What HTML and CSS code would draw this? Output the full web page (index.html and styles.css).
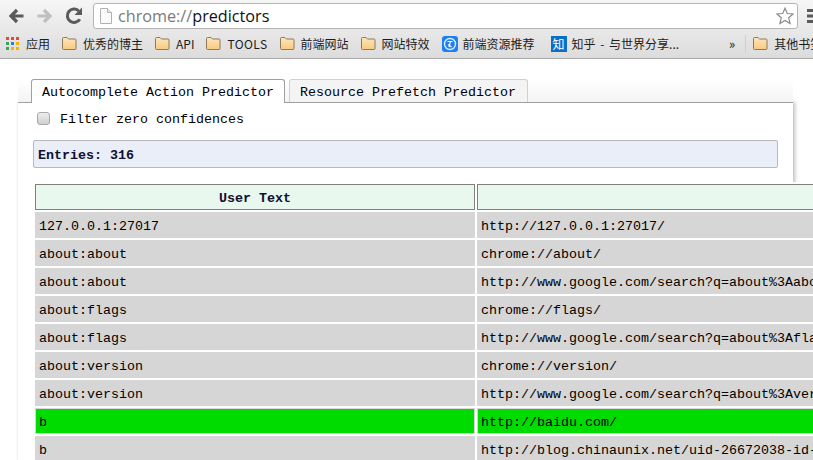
FILE: index.html
```html
<!DOCTYPE html>
<html lang="zh">
<head>
<meta charset="utf-8">
<title>chrome://predictors</title>
<link rel="stylesheet" href="styles.css">
</head>
<body>
<svg class="defs" width="0" height="0" aria-hidden="true">
  <defs>
    <linearGradient id="fg" x1="0" y1="0" x2="0" y2="1"><stop offset="0" stop-color="#fde6bf"/><stop offset="1" stop-color="#f9c97f"/></linearGradient>
    <symbol id="folder" viewBox="0 0 15 13"><path d="M1.500 12.500q-1 0-1-1V1.500q0-1 1-1h3.500l1.500 1.500h6.500q1 0 1 1v8.500q0 1-1 1z" fill="url(#fg)" stroke="#8c7a58"/></symbol>
  </defs>
</svg>
<header class="chrome">
  <div class="toolbar">
    <svg class="nav" width="24" height="24" viewBox="0 0 24 24"><path d="M19.500 12H8M13 6l-6 6 6 6" fill="none" stroke="#5a5a5a" stroke-width="3.200"/></svg>
    <svg class="nav" width="24" height="24" viewBox="0 0 24 24"><path d="M4.500 12H16M11 6l6 6-6 6" fill="none" stroke="#c0c0c0" stroke-width="3.200"/></svg>
    <svg class="nav" width="24" height="24" viewBox="0 0 24 24"><path d="M17.800 15.200A6.700 6.700 0 1 1 16.600 6.800" fill="none" stroke="#5a5a5a" stroke-width="3"/><path d="M20 3.500v7.500h-7.500z" fill="#5a5a5a"/></svg>
    <div class="omnibox">
      <svg class="page" width="12" height="16" viewBox="0 0 12 16"><path d="M.5.500h7l4 4v11H.5z" fill="#fafafa" stroke="#b0b0b0"/><path d="M7.500.500v4h4" fill="#e8e8e8" stroke="#b0b0b0"/></svg>
      <span class="url"><span class="scheme">chrome://</span>predictors</span>
      <svg class="star" width="18" height="18" viewBox="0 0 18 18"><path d="M9 1.200l2.300 5.300 5.800.5-4.400 3.800 1.400 5.700L9 13.500l-5.100 3 1.400-5.700L.9 7l5.800-.5z" fill="#fff" stroke="#8a8a8a" stroke-width="1.200"/></svg>
    </div>
    <svg class="menu" width="6" height="14" viewBox="0 0 6 14"><path d="M0 0h6v3H0zM0 5.500h6v3H0zM0 11h6v3H0z" fill="#5a5a5a"/></svg>
  </div>
  <nav class="bookmarks">
    <span class="bm bm-apps"><svg width="13" height="13" viewBox="0 0 13 13"><path d="M0 0h3v3H0zM5 0h3v3H5zM10 0h3v3h-3z" fill="#e8453c"/><path d="M0 5h3v3H0zM0 10h3v3H0z" fill="#34a853"/><path d="M5 5h3v3H5z" fill="#2f7de1"/><path d="M10 5h3v3h-3zM5 10h3v3H5zM10 10h3v3h-3z" fill="#f4b400"/></svg>应用</span>
    <span class="bm bm-next"><svg class="folder"><use href="#folder"/></svg>优秀的博主</span>
    <span class="bm bm-next"><svg class="folder"><use href="#folder"/></svg>API</span>
    <span class="bm bm-next"><svg class="folder"><use href="#folder"/></svg><span class="wide">TOOLS</span></span>
    <span class="bm bm-next"><svg class="folder"><use href="#folder"/></svg>前端网站</span>
    <span class="bm bm-next"><svg class="folder"><use href="#folder"/></svg>网站特效</span>
    <span class="bm bm-next bm-f"><svg width="16" height="16" viewBox="0 0 16 16"><rect width="16" height="16" rx="3" fill="#1c7ff5"/><circle cx="8" cy="8" r="5.500" fill="none" stroke="#dcecff" stroke-width="1.400"/><path d="M5.500 5.500h5M8.500 5.500L7 11M6 8.500l3.500 2.500" fill="none" stroke="#fff" stroke-width="1.100"/></svg>前端资源推荐</span>
    <span class="bm bm-g"><span class="zhi">知</span><span class="zhihu">知乎 - 与世界分享...</span></span>
    <span class="more">»</span>
    <span class="sep"></span>
    <span class="bm bm-h"><svg class="folder"><use href="#folder"/></svg>其他书签</span>
  </nav>
</header>
<main class="page-body">
  <div class="tabs">
    <div class="tab tab-active">Autocomplete Action Predictor</div>
    <div class="tab">Resource Prefetch Predictor</div>
  </div>
  <section class="panel">
    <label class="filter"><input type="checkbox">Filter zero confidences</label>
    <div class="entries">Entries: 316</div>
  </section>
  <table class="grid">
    <thead><tr><th class="col-a">User Text</th><th class="col-b"></th></tr></thead>
    <tbody>
      <tr><td>127.0.0.1:27017</td><td>http://127.0.0.1:27017/</td></tr>
      <tr><td>about:about</td><td>chrome://about/</td></tr>
      <tr><td>about:about</td><td>http://www.google.com/search?q=about%3Aabout</td></tr>
      <tr><td>about:flags</td><td>chrome://flags/</td></tr>
      <tr><td>about:flags</td><td>http://www.google.com/search?q=about%3Aflags</td></tr>
      <tr><td>about:version</td><td>chrome://version/</td></tr>
      <tr><td>about:version</td><td>http://www.google.com/search?q=about%3Aversion</td></tr>
      <tr class="hit"><td>b</td><td>http://baidu.com/</td></tr>
      <tr><td>b</td><td>http://blog.chinaunix.net/uid-26672038-id-3</td></tr>
    </tbody>
  </table>
</main>
</body>
</html>
```

FILE: styles.css
```css
* { box-sizing: border-box; }
html, body { margin: 0; height: 460px; overflow: hidden; background: #fff; }
body { width: 813px; font-family: "Liberation Mono", monospace; font-size: 13.33px; color: #000; }
.defs { position: absolute; }

.chrome { height: 59px; border-bottom: 1px solid #a9a9a9; background: linear-gradient(#f6f6f6, #e6e6e6 60%, #dcdcdc); overflow: hidden; }
.toolbar { height: 32px; display: flex; align-items: center; padding-left: 4px; }
.nav { margin-right: 5px; flex: none; }
.nav + .nav + .nav { margin-right: 7px; }
.omnibox { flex: none; width: 705px; height: 26px; display: flex; align-items: center; padding: 0 3px 0 6px; background: #fff; border: 1px solid #b4b4b4; border-radius: 3px; }
.page { flex: none; margin-right: 6px; }
.url { flex: 1; font: 16.2px "Open Sans", "Liberation Sans", sans-serif; color: #111; }
.scheme { color: #7a7a7a; }
.star { flex: none; }
.menu { flex: none; margin-left: 9px; }

.bookmarks { height: 26px; display: flex; align-items: center; padding: 0 0 3px 6px; white-space: nowrap; font: 12px "Noto Sans CJK SC", "Liberation Sans", sans-serif; color: #1c1c1c; }
.bm { display: flex; align-items: center; gap: 6px; flex: none; }
.bm-apps { gap: 7px; }
.folder { width: 15px; height: 13px; flex: none; }
.bm-next { margin-left: 12px; }
.wide { letter-spacing: .4px; }
.bm-f { gap: 5px; }
.bm-g { margin-left: 16px; gap: 5px; }
.zhi { width: 16px; height: 16px; background: #0b6fc9; color: #fff; font-size: 12px; line-height: 16px; text-align: center; }
.zhihu { word-spacing: 2px; }
.more { margin-left: 50px; font-size: 13px; }
.sep { width: 1px; height: 18px; margin-left: 10px; background: #cfcfcf; flex: none; }
.bm-h { margin-left: 7px; }

.page-body { position: relative; padding: 20px 0 0 18px; }
.tabs { display: flex; gap: 4px; height: 23px; padding-left: 13px; width: 775px; background: linear-gradient(#fff, #f4f4f4); position: relative; z-index: 1; }
.tab { height: 23px; padding: 4px 11px 0 10px; border: 1px solid #d0d0d0; border-bottom: 0; border-radius: 3px 3px 0 0; background: #f4f4f4; white-space: nowrap; line-height: 18px; }
.tab-active { height: 24px; padding-right: 10px; border-color: #a0a0a0; background: #fff; position: relative; z-index: 2; }
.panel { width: 775px; height: 358px; padding: 8px 15px 0; border-top: 1px solid #a0a0a0; box-shadow: 2px 0 4px rgba(0,0,0,.26), -1px 0 1px rgba(0,0,0,.03); background: #fff; }
.filter { display: flex; align-items: center; height: 17px; line-height: 17px; }
.filter input { appearance: none; width: 13px; height: 13px; margin: 0 10px 2px 4px; border: 1px solid #a8a8a8; border-radius: 3px; background: linear-gradient(#ececec, #d0d0d0); }
.entries { height: 28px; margin-top: 12px; padding: 0 4px; border: 1px solid #b9b9b9; border-radius: 2px; background: #e9eef9; font-weight: bold; line-height: 29px; color: #101030; }

.grid { position: absolute; top: 123px; left: 33px; width: 1000px; table-layout: fixed; border-collapse: separate; border-spacing: 2px; background: #fff; }
.col-a { width: 440px; }
.grid th { height: 26px; padding: 2px 0 0; border: 1px solid #808080; background: #e8f8ee; font-weight: bold; color: #101030; }
.grid td { height: 26px; padding: 2px 3px 0; border: 1px solid #d6d6d6; background: #d6d6d6; white-space: nowrap; overflow: hidden; }
.grid .hit td { background: #00dc00; border-color: #d6d6d6; }
```
